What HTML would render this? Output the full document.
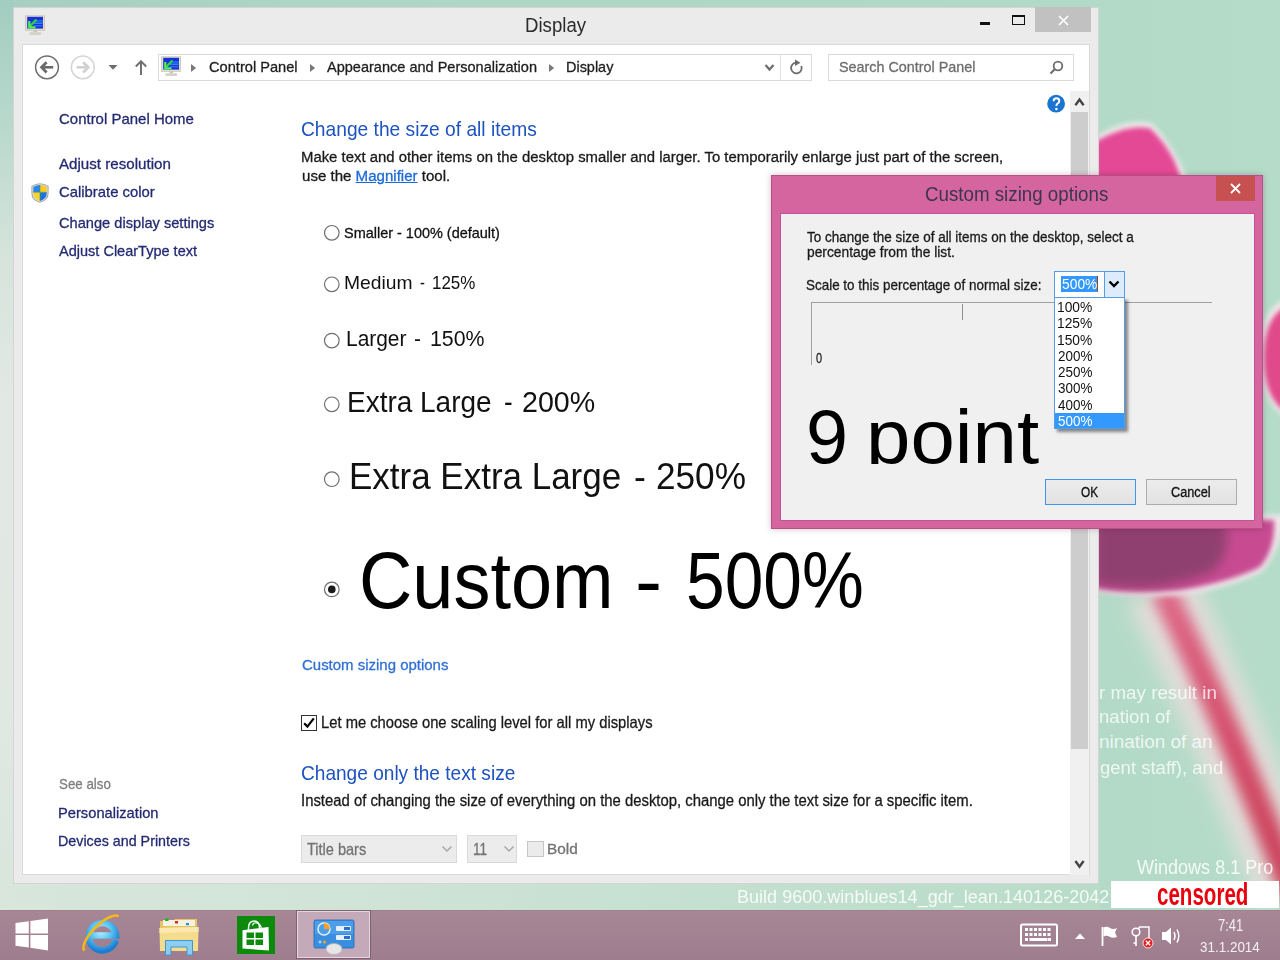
<!DOCTYPE html>
<html><head><meta charset="utf-8">
<style>
*{margin:0;padding:0;box-sizing:border-box}
html,body{width:1280px;height:960px;overflow:hidden;font-family:"Liberation Sans",sans-serif}
body{position:relative;background:#b3dac8}
.a{position:absolute}
.full{position:absolute;left:0;top:0;width:1280px;height:960px}
</style></head><body>
<!-- desktop background -->
<div class="full" style="background:linear-gradient(90deg,#a6cfc1 0px,#aed5c5 300px,#b3dac8 1100px,#b4dcc8 1280px)"></div>
<div class="a" style="left:0;top:0;width:14px;height:910px;background:linear-gradient(180deg,#a2cdc0 0px,#b8d8cc 120px,#d6e4dc 260px,#e2e8e4 400px,#e0e8e2 700px,#d8e6dc 900px)"></div>
<div class="a" style="left:0;top:883px;width:1100px;height:27px;background:linear-gradient(90deg,#d8e6dc 0px,#d2e4d8 300px,#c4e0d0 700px,#b8dcc8 1100px)"></div>
<svg class="full" viewBox="0 0 1280 960" style="position:absolute;left:0;top:0">
 <defs>
  <filter id="bl6" x="-50%" y="-50%" width="200%" height="200%"><feGaussianBlur stdDeviation="6"/></filter>
  <filter id="bl3" x="-50%" y="-50%" width="200%" height="200%"><feGaussianBlur stdDeviation="2.5"/></filter>
  <filter id="bl8" x="-50%" y="-50%" width="200%" height="200%"><feGaussianBlur stdDeviation="7"/></filter>
  <filter id="bl10" x="-50%" y="-50%" width="200%" height="200%"><feGaussianBlur stdDeviation="10"/></filter>
 </defs>
 <!-- stem halo -->
 <path d="M1160 588 Q1195 660 1225 730 Q1255 800 1292 892" stroke="#e8dedc" stroke-width="70" fill="none" filter="url(#bl10)" opacity="0.9"/>
 <defs><linearGradient id="stg" x1="0" y1="590" x2="0" y2="900" gradientUnits="userSpaceOnUse"><stop offset="0" stop-color="#de6a88"/><stop offset="0.5" stop-color="#d44c6a"/><stop offset="1" stop-color="#c84058"/></linearGradient></defs>
 <path d="M1163 590 Q1198 662 1228 732 Q1258 802 1294 894" stroke="url(#stg)" stroke-width="26" fill="none" filter="url(#bl8)"/>
 <!-- top petal -->
 <path d="M1095 138 Q1125 118 1152 124 Q1168 140 1178 160 Q1186 175 1190 190 L1095 190 Z" fill="#f4f2f0" filter="url(#bl3)"/>
 <path d="M1095 142 Q1125 124 1150 128 Q1165 142 1174 160 Q1181 175 1184 190 L1095 190 Z" fill="#e44896" filter="url(#bl3)"/>
 <!-- right petal -->
 <path d="M1290 298 Q1260 305 1260 355 Q1260 405 1290 420 Z" fill="#f0e8ec" filter="url(#bl3)"/>
 <path d="M1290 306 Q1264 312 1264 358 Q1264 402 1290 414 Z" fill="#e0488a" filter="url(#bl3)"/>
 <!-- bulb -->
 <path d="M1095 515 L1285 515 Q1282 548 1262 572 Q1230 588 1180 595 Q1130 598 1095 592 Z" fill="#f0e6ea" filter="url(#bl3)"/>
 <path d="M1095 520 L1274 520 Q1276 548 1260 567 Q1230 582 1180 590 Q1130 594 1095 588 Z" fill="#c84c92" filter="url(#bl3)"/>
 <path d="M1095 520 L1225 520 Q1232 550 1215 570 Q1180 586 1140 588 Q1115 587 1095 584 Z" fill="#904070" filter="url(#bl6)"/>
</svg>
<div style="position:absolute;left:1099.01px;top:683.50px;font-size:18.93px;font-weight:normal;font-family:'Liberation Sans',sans-serif;color:rgba(255,255,255,0.78);line-height:1;white-space:nowrap;transform:scaleX(0.9924);transform-origin:0 0;">r may result in</div>
<div style="position:absolute;left:1099.02px;top:708.10px;font-size:18.93px;font-weight:normal;font-family:'Liberation Sans',sans-serif;color:rgba(255,255,255,0.78);line-height:1;white-space:nowrap;transform:scaleX(0.9843);transform-origin:0 0;">nation of</div>
<div style="position:absolute;left:1099.00px;top:733.30px;font-size:18.93px;font-weight:normal;font-family:'Liberation Sans',sans-serif;color:rgba(255,255,255,0.78);line-height:1;white-space:nowrap;">nination of an</div>
<div style="position:absolute;left:1100.00px;top:758.50px;font-size:18.93px;font-weight:normal;font-family:'Liberation Sans',sans-serif;color:rgba(255,255,255,0.78);line-height:1;white-space:nowrap;transform:scaleX(0.9788);transform-origin:0 0;">gent staff), and</div>
<div style="position:absolute;left:1137.00px;top:856.60px;font-size:20.35px;font-weight:normal;font-family:'Liberation Sans',sans-serif;color:rgba(255,255,255,0.85);line-height:1;white-space:nowrap;transform:scaleX(0.8862);transform-origin:0 0;">Windows 8.1 Pro</div>
<div style="position:absolute;left:737.44px;top:888.40px;font-size:18.9px;font-weight:normal;font-family:'Liberation Sans',sans-serif;color:rgba(255,255,255,0.85);line-height:1;white-space:nowrap;transform:scaleX(0.9555);transform-origin:0 0;">Build 9600.winblues14_gdr_lean.140126-2042</div>

<!-- main window -->
<div class="a" style="left:13px;top:7px;width:1086px;height:877px;background:#ebebeb;border:1px solid #d4d4d4"></div>
<div class="a" style="left:22px;top:44px;width:1068px;height:831px;background:#fff;border:1px solid #dadada"></div>
<!-- title icon -->
<svg class="a" style="left:25px;top:15px" width="21" height="21" viewBox="0 0 21 21">
 <rect x="0.6" y="0.8" width="19" height="14.5" fill="#e2dfcf" stroke="#c8c4b0" stroke-width="0.8"/>
 <rect x="2.2" y="1.8" width="15.8" height="11.8" fill="#1a30d8"/>
 <rect x="9" y="5" width="9" height="3" fill="#1a70f0" opacity="0.8"/>
 <path d="M9 8.5 H17.5 M9 10.8 H17.5" stroke="#3a80f0" stroke-width="1"/>
 <path d="M11.5 4.5 L5 11.2" stroke="#30d040" stroke-width="2.4"/>
 <path d="M4.3 6 V12.3 H10.5" stroke="#50f060" stroke-width="2.2" fill="none"/>
 <rect x="8.5" y="15.3" width="3.5" height="2" fill="#c8c4b4"/>
 <rect x="4.5" y="17.3" width="11.5" height="2.6" fill="#d4d0c4"/>
</svg>
<!-- min max close -->
<div class="a" style="left:980px;top:22px;width:10px;height:3px;background:#111"></div>
<div class="a" style="left:1012px;top:15px;width:13px;height:10px;border:1px solid #111;border-top:2px solid #111"></div>
<div class="a" style="left:1035px;top:7px;width:56px;height:25px;background:#c1c1c1"></div>
<svg class="a" style="left:1057px;top:14px" width="13" height="13" viewBox="0 0 13 13"><path d="M2 2 L11 11 M11 2 L2 11" stroke="#fff" stroke-width="1.6"/></svg>

<!-- nav buttons -->
<svg class="a" style="left:30px;top:50px" width="70" height="34" viewBox="0 0 70 34">
 <circle cx="17" cy="17.3" r="11.4" fill="none" stroke="#6e6e6e" stroke-width="1.5"/>
 <path d="M13 17.3 H23.2" stroke="#6a6a6a" stroke-width="2.6"/>
 <path d="M16.6 12.2 L11.6 17.3 L16.6 22.4" fill="none" stroke="#6a6a6a" stroke-width="2.8"/>
 <circle cx="52.8" cy="17.3" r="11.4" fill="none" stroke="#d4d4d4" stroke-width="1.5"/>
 <path d="M56.8 17.3 H46.6" stroke="#d0d0d0" stroke-width="2.6"/>
 <path d="M53.2 12.2 L58.2 17.3 L53.2 22.4" fill="none" stroke="#d0d0d0" stroke-width="2.8"/>
</svg>
<svg class="a" style="left:105px;top:60px" width="50" height="18" viewBox="0 0 50 18">
 <path d="M3.5 5 L12.5 5 L8 9.7 Z" fill="#6d6d6d"/>
 <path d="M36 15 V1.5 M30.8 6.5 L36 1.3 L41.2 6.5" stroke="#707070" stroke-width="2" fill="none"/>
</svg>
<!-- address bar -->
<div class="a" style="left:158px;top:54px;width:654px;height:27px;border:1px solid #d9d9d9;background:#fff"></div>
<div class="a" style="left:780px;top:55px;width:1px;height:25px;background:#e2e2e2"></div>
<svg class="a" style="left:161px;top:56px" width="21" height="21" viewBox="0 0 21 21">
 <rect x="0.6" y="0.8" width="19" height="14.5" fill="#e2dfcf" stroke="#c8c4b0" stroke-width="0.8"/>
 <rect x="2.2" y="1.8" width="15.8" height="11.8" fill="#1a30d8"/>
 <rect x="9" y="5" width="9" height="3" fill="#1a70f0" opacity="0.8"/>
 <path d="M9 8.5 H17.5 M9 10.8 H17.5" stroke="#3a80f0" stroke-width="1"/>
 <path d="M11.5 4.5 L5 11.2" stroke="#30d040" stroke-width="2.4"/>
 <path d="M4.3 6 V12.3 H10.5" stroke="#50f060" stroke-width="2.2" fill="none"/>
 <rect x="8.5" y="15.3" width="3.5" height="2" fill="#c8c4b4"/>
 <rect x="4.5" y="17.3" width="11.5" height="2.6" fill="#d4d0c4"/>
</svg>
<svg class="a" style="left:188px;top:60px" width="380" height="16" viewBox="0 0 380 16">
 <path d="M3 4 L8.2 8 L3 12 Z" fill="#7a7a7a"/>
 <path d="M122 4 L127.2 8 L122 12 Z" fill="#7a7a7a"/>
 <path d="M361 4 L366.2 8 L361 12 Z" fill="#7a7a7a"/>
</svg>
<svg class="a" style="left:760px;top:58px" width="50" height="20" viewBox="0 0 50 20">
 <path d="M5.5 7 L9.5 11.5 L13.5 7" stroke="#6d6d6d" stroke-width="2.2" fill="none"/>
 <path d="M41.3 8 A5.3 5.3 0 1 1 36 4.7" stroke="#6d6d6d" stroke-width="1.8" fill="none"/>
 <path d="M35 1.5 L40.5 4.7 L35 8 Z" fill="#6d6d6d"/>
</svg>
<!-- search -->
<div class="a" style="left:828px;top:54px;width:246px;height:27px;border:1px solid #d9d9d9;background:#fff"></div>
<svg class="a" style="left:1046px;top:58px" width="20" height="20" viewBox="0 0 20 20">
 <circle cx="12" cy="8" r="4.3" fill="none" stroke="#6d6d6d" stroke-width="1.8"/>
 <path d="M9 11 L4.5 15.5" stroke="#6d6d6d" stroke-width="2.2"/>
</svg>
<!-- help -->
<svg class="a" style="left:1046px;top:93px" width="21" height="22" viewBox="0 0 21 22">
 <circle cx="10.1" cy="10.7" r="8.9" fill="#1a74d0"/>
 <path d="M7.6 8.2 Q7.6 5.3 10.5 5.3 Q13.3 5.3 13.3 7.9 Q13.3 9.5 11.6 10.5 Q10.4 11.3 10.4 13" stroke="#fff" stroke-width="1.9" fill="none"/>
 <circle cx="10.4" cy="15.9" r="1.25" fill="#fff"/>
</svg>
<!-- scrollbar -->
<div class="a" style="left:1070px;top:91px;width:19px;height:784px;background:#f0f0f0"></div>
<div class="a" style="left:1071px;top:112px;width:17px;height:637px;background:#cdcdcd"></div>
<svg class="a" style="left:1070px;top:94px" width="19" height="16" viewBox="0 0 19 16"><path d="M5.4 11.2 L9.5 5.6 L13.6 11.2" stroke="#444" stroke-width="2.4" fill="none"/></svg>
<svg class="a" style="left:1070px;top:856px" width="19" height="16" viewBox="0 0 19 16"><path d="M5.4 5 L9.5 10.6 L13.6 5" stroke="#444" stroke-width="2.4" fill="none"/></svg>

<!-- shield -->
<svg class="a" style="left:30px;top:181px" width="20" height="23" viewBox="0 0 20 23">
 <defs><clipPath id="shc"><path d="M3.3 6 Q10 1.8 16.7 6 L16.7 12 Q16.7 18 10 19.9 Q3.3 18 3.3 12 Z"/></clipPath></defs>
 <path d="M1.4 5 Q10 -0.6 18.6 5 L18.6 12 Q18.6 19.8 10 21.8 Q1.4 19.8 1.4 12 Z" fill="#a4a4a4"/>
 <path d="M2.4 5.5 Q10 0.8 17.6 5.5 L17.6 12 Q17.6 18.8 10 20.8 Q2.4 18.8 2.4 12 Z" fill="#dcdcdc"/>
 <g clip-path="url(#shc)">
  <rect x="0" y="0" width="10" height="11.3" fill="#2a86e8"/>
  <rect x="10" y="0" width="10" height="11.3" fill="#f6cc20"/>
  <rect x="0" y="11.3" width="10" height="12" fill="#f6d42a"/>
  <rect x="10" y="11.3" width="10" height="12" fill="#1a74e0"/>
  <path d="M0 11.3 H20 M10 0 V23" stroke="#5a8a60" stroke-width="0.6"/>
 </g>
</svg>
<!-- radios -->
<svg class="a" style="left:320px;top:220px" width="30" height="390" viewBox="0 0 30 390">
 <g fill="#fff" stroke="#6e6e6e" stroke-width="1.2">
  <circle cx="11.8" cy="12.8" r="7.3"/>
  <circle cx="11.8" cy="64.3" r="7.3"/>
  <circle cx="11.8" cy="120.6" r="7.3"/>
  <circle cx="11.8" cy="184.3" r="7.3"/>
  <circle cx="11.8" cy="259.2" r="7.3"/>
  <circle cx="11.8" cy="369.4" r="7.3"/>
 </g>
 <circle cx="11.8" cy="369.4" r="3.8" fill="#1a1a1a"/>
</svg>
<!-- checkbox -->
<div class="a" style="left:301px;top:715px;width:16px;height:16px;border:1px solid #333;background:#fff"></div>
<svg class="a" style="left:301px;top:715px" width="16" height="16" viewBox="0 0 16 16"><path d="M3.2 8.2 L6.4 11.6 L12.8 3.4" stroke="#000" stroke-width="2.2" fill="none"/></svg>
<!-- dropdowns -->
<div class="a" style="left:301px;top:835px;width:156px;height:28px;border:1px solid #d9d9d9;background:#ececec"></div>
<div class="a" style="left:467px;top:835px;width:50px;height:28px;border:1px solid #d9d9d9;background:#ececec"></div>
<svg class="a" style="left:438px;top:842px" width="80" height="14" viewBox="0 0 80 14">
 <path d="M4.5 4.5 L9 9 L13.5 4.5" stroke="#a8a8a8" stroke-width="1.5" fill="none"/>
 <path d="M66.5 4.5 L71 9 L75.5 4.5" stroke="#a8a8a8" stroke-width="1.5" fill="none"/>
</svg>
<div class="a" style="left:527px;top:841px;width:17px;height:16px;border:1px solid #c6c6c6;background:#ebebeb"></div>

<div style="position:absolute;left:525.06px;top:15.90px;font-size:19.91px;font-weight:normal;font-family:'Liberation Sans',sans-serif;color:#2b2b2b;line-height:1;white-space:nowrap;transform:scaleX(0.9360);transform-origin:0 0;">Display</div>
<div style="position:absolute;left:208.60px;top:60.20px;font-size:14.97px;font-weight:normal;font-family:'Liberation Sans',sans-serif;color:#1e1e1e;line-height:1;white-space:nowrap;transform:scaleX(0.9771);transform-origin:0 0;-webkit-text-stroke:0.3px currentColor;">Control Panel</div>
<div style="position:absolute;left:326.60px;top:60.20px;font-size:14.97px;font-weight:normal;font-family:'Liberation Sans',sans-serif;color:#1e1e1e;line-height:1;white-space:nowrap;transform:scaleX(0.9706);transform-origin:0 0;-webkit-text-stroke:0.3px currentColor;">Appearance and Personalization</div>
<div style="position:absolute;left:565.83px;top:60.20px;font-size:14.97px;font-weight:normal;font-family:'Liberation Sans',sans-serif;color:#1e1e1e;line-height:1;white-space:nowrap;transform:scaleX(0.9651);transform-origin:0 0;-webkit-text-stroke:0.3px currentColor;">Display</div>
<div style="position:absolute;left:839.40px;top:60.00px;font-size:14.97px;font-weight:normal;font-family:'Liberation Sans',sans-serif;color:#6d6d6d;line-height:1;white-space:nowrap;transform:scaleX(0.9587);transform-origin:0 0;-webkit-text-stroke:0.3px currentColor;">Search Control Panel</div>
<div style="position:absolute;left:59.30px;top:110.90px;font-size:15.41px;font-weight:normal;font-family:'Liberation Sans',sans-serif;color:#232a72;line-height:1;white-space:nowrap;transform:scaleX(0.9721);transform-origin:0 0;-webkit-text-stroke:0.3px currentColor;">Control Panel Home</div>
<div style="position:absolute;left:59.30px;top:155.70px;font-size:15.41px;font-weight:normal;font-family:'Liberation Sans',sans-serif;color:#232a72;line-height:1;white-space:nowrap;transform:scaleX(0.9821);transform-origin:0 0;-webkit-text-stroke:0.3px currentColor;">Adjust resolution</div>
<div style="position:absolute;left:59.30px;top:184.40px;font-size:15.41px;font-weight:normal;font-family:'Liberation Sans',sans-serif;color:#232a72;line-height:1;white-space:nowrap;transform:scaleX(0.9647);transform-origin:0 0;-webkit-text-stroke:0.3px currentColor;">Calibrate color</div>
<div style="position:absolute;left:59.30px;top:214.50px;font-size:15.41px;font-weight:normal;font-family:'Liberation Sans',sans-serif;color:#232a72;line-height:1;white-space:nowrap;transform:scaleX(0.9495);transform-origin:0 0;-webkit-text-stroke:0.3px currentColor;">Change display settings</div>
<div style="position:absolute;left:59.30px;top:243.40px;font-size:15.41px;font-weight:normal;font-family:'Liberation Sans',sans-serif;color:#232a72;line-height:1;white-space:nowrap;transform:scaleX(0.9426);transform-origin:0 0;-webkit-text-stroke:0.3px currentColor;">Adjust ClearType text</div>
<div style="position:absolute;left:59.40px;top:775.75px;font-size:15.41px;font-weight:normal;font-family:'Liberation Sans',sans-serif;color:#7f7f7f;line-height:1;white-space:nowrap;transform:scaleX(0.8638);transform-origin:0 0;-webkit-text-stroke:0.3px currentColor;">See also</div>
<div style="position:absolute;left:58.45px;top:804.50px;font-size:15.41px;font-weight:normal;font-family:'Liberation Sans',sans-serif;color:#232a72;line-height:1;white-space:nowrap;transform:scaleX(0.9540);transform-origin:0 0;-webkit-text-stroke:0.3px currentColor;">Personalization</div>
<div style="position:absolute;left:58.47px;top:833.00px;font-size:15.41px;font-weight:normal;font-family:'Liberation Sans',sans-serif;color:#232a72;line-height:1;white-space:nowrap;transform:scaleX(0.9276);transform-origin:0 0;-webkit-text-stroke:0.3px currentColor;">Devices and Printers</div>
<div style="position:absolute;left:301.27px;top:119.40px;font-size:20.64px;font-weight:normal;font-family:'Liberation Sans',sans-serif;color:#1d52c0;line-height:1;white-space:nowrap;transform:scaleX(0.9308);transform-origin:0 0;">Change the size of all items</div>
<div style="position:absolute;left:301.20px;top:150.10px;font-size:14.83px;font-weight:normal;font-family:'Liberation Sans',sans-serif;color:#1a1a1a;line-height:1;white-space:nowrap;transform:scaleX(1.0038);transform-origin:0 0;-webkit-text-stroke:0.3px currentColor;">Make text and other items on the desktop smaller and larger. To temporarily enlarge just part of the screen,</div>
<div style="position:absolute;left:302.20px;top:168.70px;font-size:14.83px;font-weight:normal;font-family:'Liberation Sans',sans-serif;color:#1a1a1a;line-height:1;white-space:nowrap;transform:scaleX(1.0161);transform-origin:0 0;-webkit-text-stroke:0.3px currentColor;">use the <span style="color:#1a6ad8;text-decoration:underline">Magnifier</span> tool.</div>
<div style="position:absolute;left:344.30px;top:225.50px;font-size:14.97px;font-weight:normal;font-family:'Liberation Sans',sans-serif;color:#111;line-height:1;white-space:nowrap;transform:scaleX(0.9659);transform-origin:0 0;-webkit-text-stroke:0.3px currentColor;">Smaller - 100% (default)</div>
<div style="position:absolute;left:344.46px;top:273.70px;font-size:18.46px;font-weight:normal;font-family:'Liberation Sans',sans-serif;color:#111;line-height:1;white-space:nowrap;transform:scaleX(1.0449);transform-origin:0 0;">Medium</div>
<div style="position:absolute;left:420.30px;top:273.70px;font-size:18.46px;font-weight:normal;font-family:'Liberation Sans',sans-serif;color:#111;line-height:1;white-space:nowrap;transform:scaleX(0.8000);transform-origin:0 0;">-</div>
<div style="position:absolute;left:432.28px;top:273.70px;font-size:18.46px;font-weight:normal;font-family:'Liberation Sans',sans-serif;color:#111;line-height:1;white-space:nowrap;transform:scaleX(0.9200);transform-origin:0 0;">125%</div>
<div style="position:absolute;left:345.78px;top:327.00px;font-size:22.82px;font-weight:normal;font-family:'Liberation Sans',sans-serif;color:#111;line-height:1;white-space:nowrap;transform:scaleX(0.9167);transform-origin:0 0;">Larger</div>
<div style="position:absolute;left:413.88px;top:327.00px;font-size:22.82px;font-weight:normal;font-family:'Liberation Sans',sans-serif;color:#111;line-height:1;white-space:nowrap;transform:scaleX(0.9167);transform-origin:0 0;">-</div>
<div style="position:absolute;left:429.66px;top:327.00px;font-size:22.82px;font-weight:normal;font-family:'Liberation Sans',sans-serif;color:#111;line-height:1;white-space:nowrap;transform:scaleX(0.9358);transform-origin:0 0;">150%</div>
<div style="position:absolute;left:347.11px;top:387.10px;font-size:29.65px;font-weight:normal;font-family:'Liberation Sans',sans-serif;color:#111;line-height:1;white-space:nowrap;transform:scaleX(0.9433);transform-origin:0 0;">Extra Large</div>
<div style="position:absolute;left:503.52px;top:387.10px;font-size:29.65px;font-weight:normal;font-family:'Liberation Sans',sans-serif;color:#111;line-height:1;white-space:nowrap;transform:scaleX(0.8750);transform-origin:0 0;">-</div>
<div style="position:absolute;left:522.13px;top:387.10px;font-size:29.65px;font-weight:normal;font-family:'Liberation Sans',sans-serif;color:#111;line-height:1;white-space:nowrap;transform:scaleX(0.9657);transform-origin:0 0;">200%</div>
<div style="position:absolute;left:349.17px;top:457.80px;font-size:37.06px;font-weight:normal;font-family:'Liberation Sans',sans-serif;color:#111;line-height:1;white-space:nowrap;transform:scaleX(0.9441);transform-origin:0 0;">Extra Extra Large</div>
<div style="position:absolute;left:633.94px;top:457.80px;font-size:37.06px;font-weight:normal;font-family:'Liberation Sans',sans-serif;color:#111;line-height:1;white-space:nowrap;transform:scaleX(0.9600);transform-origin:0 0;">-</div>
<div style="position:absolute;left:656.35px;top:457.80px;font-size:37.06px;font-weight:normal;font-family:'Liberation Sans',sans-serif;color:#111;line-height:1;white-space:nowrap;transform:scaleX(0.9492);transform-origin:0 0;">250%</div>
<div style="position:absolute;left:358.58px;top:540.80px;font-size:79.36px;font-weight:normal;font-family:'Liberation Sans',sans-serif;color:#000;line-height:1;white-space:nowrap;transform:scaleX(0.9311);transform-origin:0 0;">Custom</div>
<div style="position:absolute;left:635.42px;top:540.80px;font-size:79.36px;font-weight:normal;font-family:'Liberation Sans',sans-serif;color:#000;line-height:1;white-space:nowrap;transform:scaleX(1.0250);transform-origin:0 0;">-</div>
<div style="position:absolute;left:686.37px;top:540.80px;font-size:79.36px;font-weight:normal;font-family:'Liberation Sans',sans-serif;color:#000;line-height:1;white-space:nowrap;transform:scaleX(0.8764);transform-origin:0 0;">500%</div>
<div style="position:absolute;left:302.00px;top:656.90px;font-size:15.55px;font-weight:normal;font-family:'Liberation Sans',sans-serif;color:#2f6fd6;line-height:1;white-space:nowrap;transform:scaleX(0.9625);transform-origin:0 0;-webkit-text-stroke:0.3px currentColor;">Custom sizing options</div>
<div style="position:absolute;left:320.59px;top:714.00px;font-size:16.28px;font-weight:normal;font-family:'Liberation Sans',sans-serif;color:#1a1a1a;line-height:1;white-space:nowrap;transform:scaleX(0.9077);transform-origin:0 0;-webkit-text-stroke:0.3px currentColor;">Let me choose one scaling level for all my displays</div>
<div style="position:absolute;left:301.07px;top:763.30px;font-size:20.49px;font-weight:normal;font-family:'Liberation Sans',sans-serif;color:#1d52c0;line-height:1;white-space:nowrap;transform:scaleX(0.9316);transform-origin:0 0;">Change only the text size</div>
<div style="position:absolute;left:301.06px;top:793.20px;font-size:15.84px;font-weight:normal;font-family:'Liberation Sans',sans-serif;color:#1a1a1a;line-height:1;white-space:nowrap;transform:scaleX(0.9391);transform-origin:0 0;-webkit-text-stroke:0.3px currentColor;">Instead of changing the size of everything on the desktop, change only the text size for a specific item.</div>
<div style="position:absolute;left:306.90px;top:841.00px;font-size:16.28px;font-weight:normal;font-family:'Liberation Sans',sans-serif;color:#737373;line-height:1;white-space:nowrap;transform:scaleX(0.8934);transform-origin:0 0;-webkit-text-stroke:0.3px currentColor;">Title bars</div>
<div style="position:absolute;left:472.87px;top:841.00px;font-size:16.28px;font-weight:normal;font-family:'Liberation Sans',sans-serif;color:#737373;line-height:1;white-space:nowrap;transform:scaleX(0.8271);transform-origin:0 0;-webkit-text-stroke:0.3px currentColor;">11</div>
<div style="position:absolute;left:546.99px;top:840.50px;font-size:15.26px;font-weight:normal;font-family:'Liberation Sans',sans-serif;color:#737373;line-height:1;white-space:nowrap;transform:scaleX(1.0089);transform-origin:0 0;-webkit-text-stroke:0.3px currentColor;">Bold</div>

<!-- dialog -->
<div class="a" style="left:771px;top:175px;width:492px;height:354px;background:#d5659f;border:1px solid #b85088;box-shadow:0 0 6px rgba(60,0,30,0.25)"></div>
<div class="a" style="left:1216px;top:176px;width:39px;height:25px;background:#c75050"></div>
<svg class="a" style="left:1228px;top:181px" width="15" height="15" viewBox="0 0 15 15"><path d="M3 3 L12 12 M12 3 L3 12" stroke="#fff" stroke-width="1.8"/></svg>
<div class="a" style="left:780px;top:213px;width:475px;height:308px;background:#c4529a"></div>
<div class="a" style="left:781px;top:214px;width:473px;height:306px;background:#f0f0f0"></div>
<!-- ruler -->
<div class="a" style="left:811px;top:302px;width:401px;height:1px;background:#a0a0a0"></div>
<div class="a" style="left:811px;top:302px;width:1px;height:63px;background:#a0a0a0"></div>
<div class="a" style="left:962px;top:304px;width:1px;height:16px;background:#909090"></div>
<!-- buttons -->
<div class="a" style="left:1045px;top:479px;width:91px;height:26px;border:1px solid #3c97e8;background:linear-gradient(#ececec,#e2e2e2)"></div>
<div class="a" style="left:1146px;top:479px;width:91px;height:26px;border:1px solid #adadad;background:linear-gradient(#ececec,#e2e2e2)"></div>
<div style="position:absolute;left:925.30px;top:185.25px;font-size:19.77px;font-weight:normal;font-family:'Liberation Sans',sans-serif;color:#3a3552;line-height:1;white-space:nowrap;transform:scaleX(0.9479);transform-origin:0 0;">Custom sizing options</div>
<div style="position:absolute;left:806.60px;top:229.50px;font-size:14.39px;font-weight:normal;font-family:'Liberation Sans',sans-serif;color:#1a1a1a;line-height:1;white-space:nowrap;transform:scaleX(0.9377);transform-origin:0 0;-webkit-text-stroke:0.3px currentColor;">To change the size of all items on the desktop, select a</div>
<div style="position:absolute;left:806.60px;top:244.90px;font-size:14.39px;font-weight:normal;font-family:'Liberation Sans',sans-serif;color:#1a1a1a;line-height:1;white-space:nowrap;transform:scaleX(0.9588);transform-origin:0 0;-webkit-text-stroke:0.3px currentColor;">percentage from the list.</div>
<div style="position:absolute;left:806.00px;top:277.10px;font-size:15.12px;font-weight:normal;font-family:'Liberation Sans',sans-serif;color:#1a1a1a;line-height:1;white-space:nowrap;transform:scaleX(0.8900);transform-origin:0 0;-webkit-text-stroke:0.3px currentColor;">Scale to this percentage of normal size:</div>
<div style="position:absolute;left:815.50px;top:351.00px;font-size:14.54px;font-weight:normal;font-family:'Liberation Sans',sans-serif;color:#222;line-height:1;white-space:nowrap;transform:scaleX(0.7500);transform-origin:0 0;-webkit-text-stroke:0.3px currentColor;">0</div>
<div style="position:absolute;left:1080.80px;top:486.20px;font-size:13.95px;font-weight:normal;font-family:'Liberation Sans',sans-serif;color:#111;line-height:1;white-space:nowrap;transform:scaleX(0.8493);transform-origin:0 0;-webkit-text-stroke:0.3px currentColor;">OK</div>
<div style="position:absolute;left:1170.50px;top:486.20px;font-size:13.95px;font-weight:normal;font-family:'Liberation Sans',sans-serif;color:#111;line-height:1;white-space:nowrap;transform:scaleX(0.9125);transform-origin:0 0;-webkit-text-stroke:0.3px currentColor;">Cancel</div>
<div class="full" style="clip-path:inset(0 0 496px 0)">
<div style="position:absolute;left:805.73px;top:399.00px;font-size:76.16px;font-weight:normal;font-family:'Liberation Sans',sans-serif;color:#000;line-height:1;white-space:nowrap;transform:scaleX(0.9917);transform-origin:0 0;">9</div>
<div style="position:absolute;left:866.41px;top:399.00px;font-size:76.16px;font-weight:normal;font-family:'Liberation Sans',sans-serif;color:#000;line-height:1;white-space:nowrap;transform:scaleX(1.0479);transform-origin:0 0;">point</div>
</div>
<!-- combobox -->
<div class="a" style="left:1054px;top:271px;width:71px;height:27px;border:1px solid #569de5;background:#fff"></div>
<div class="a" style="left:1104px;top:272px;width:20px;height:25px;background:#dcecfc;border-left:1px solid #569de5"></div>
<svg class="a" style="left:1104px;top:276px" width="20" height="16" viewBox="0 0 20 16"><path d="M5.5 5.5 L10 10 L14.5 5.5" stroke="#000" stroke-width="2.4" fill="none"/></svg>
<div class="a" style="left:1061px;top:275.5px;width:37px;height:16px;background:#3399ff"></div>
<div class="a" style="left:1097px;top:276px;width:1px;height:15px;background:#a04000"></div>
<!-- list -->
<div class="a" style="left:1054px;top:297px;width:71px;height:132px;border:1px solid #569de5;background:#fff;box-shadow:3px 3px 3px rgba(0,0,0,0.45)"></div>
<div class="a" style="left:1055px;top:413px;width:69px;height:15px;background:#3399ff"></div>
<div style="position:absolute;left:1062.00px;top:276.30px;font-size:15.12px;font-weight:normal;font-family:'Liberation Sans',sans-serif;color:#fff;line-height:1;white-space:nowrap;transform:scaleX(0.9160);transform-origin:0 0;">500%</div>
<div style="position:absolute;left:1057.22px;top:299.90px;font-size:14.1px;font-weight:normal;font-family:'Liberation Sans',sans-serif;color:#111;line-height:1;white-space:nowrap;transform:scaleX(0.9799);transform-origin:0 0;">100%</div>
<div style="position:absolute;left:1057.22px;top:316.20px;font-size:14.1px;font-weight:normal;font-family:'Liberation Sans',sans-serif;color:#111;line-height:1;white-space:nowrap;transform:scaleX(0.9799);transform-origin:0 0;">125%</div>
<div style="position:absolute;left:1057.22px;top:332.50px;font-size:14.1px;font-weight:normal;font-family:'Liberation Sans',sans-serif;color:#111;line-height:1;white-space:nowrap;transform:scaleX(0.9799);transform-origin:0 0;">150%</div>
<div style="position:absolute;left:1058.20px;top:348.80px;font-size:14.1px;font-weight:normal;font-family:'Liberation Sans',sans-serif;color:#111;line-height:1;white-space:nowrap;transform:scaleX(0.9530);transform-origin:0 0;">200%</div>
<div style="position:absolute;left:1058.20px;top:365.10px;font-size:14.1px;font-weight:normal;font-family:'Liberation Sans',sans-serif;color:#111;line-height:1;white-space:nowrap;transform:scaleX(0.9530);transform-origin:0 0;">250%</div>
<div style="position:absolute;left:1058.20px;top:381.40px;font-size:14.1px;font-weight:normal;font-family:'Liberation Sans',sans-serif;color:#111;line-height:1;white-space:nowrap;transform:scaleX(0.9530);transform-origin:0 0;">300%</div>
<div style="position:absolute;left:1058.20px;top:397.70px;font-size:14.1px;font-weight:normal;font-family:'Liberation Sans',sans-serif;color:#111;line-height:1;white-space:nowrap;transform:scaleX(0.9530);transform-origin:0 0;">400%</div>
<div style="position:absolute;left:1058.20px;top:414.00px;font-size:14.1px;font-weight:normal;font-family:'Liberation Sans',sans-serif;color:#fff;line-height:1;white-space:nowrap;transform:scaleX(0.9530);transform-origin:0 0;">500%</div>

<!-- taskbar -->
<div class="a" style="left:0;top:910px;width:1280px;height:50px;background:linear-gradient(180deg,#9a7888 0px,#a78696 1px,#a38292 20px,#9e7e8e 50px)"></div>
<!-- windows logo -->
<svg class="a" style="left:14px;top:917px" width="36" height="35" viewBox="0 0 36 35">
 <path d="M1.5 6 L14.8 4.2 L14.8 16.5 L1.5 16.5 Z M16.4 4 L34 1.4 L34 16.5 L16.4 16.5 Z M1.5 18 L14.8 18 L14.8 30.5 L1.5 28.8 Z M16.4 18 L34 18 L34 33.4 L16.4 30.8 Z" fill="#fff"/>
</svg>
<!-- IE -->
<svg class="a" style="left:78px;top:912px" width="46" height="44" viewBox="0 0 46 44">
 <defs><radialGradient id="ieg" cx="0.45" cy="0.3" r="0.75"><stop offset="0" stop-color="#b8f0ff"/><stop offset="0.5" stop-color="#56c4f4"/><stop offset="1" stop-color="#1a7cd0"/></radialGradient></defs>
 <path d="M37.6 28.2 A13.6 13.6 0 1 1 38 23.5 L11 23.5" fill="none" stroke="url(#ieg)" stroke-width="6.6"/>
 <g transform="translate(23.5 21.5) rotate(-45)"><path d="M-24 0 A24 8.5 0 0 1 24 0" fill="none" stroke="#f4b81e" stroke-width="2.6"/></g>
</svg>
<!-- explorer -->
<svg class="a" style="left:157px;top:915px" width="44" height="42" viewBox="0 0 44 42">
 <path d="M3 6 L16 6 L18 4 L40 4 L41 36 L3 36 Z" fill="#e6c466"/>
 <rect x="6" y="5" width="32" height="6" fill="#f6f2e0"/>
 <rect x="8" y="3.5" width="3.5" height="2.5" fill="#18b818"/><rect x="18" y="6" width="3" height="2.5" fill="#d83018"/><rect x="29" y="8" width="3" height="2.2" fill="#2090e0"/>
 <path d="M2.5 13 L41.5 12 L41 36 L3 36 Z" fill="#f4dc8c"/>
 <path d="M2.5 13 L41.5 12 L41.5 17 L2.5 18 Z" fill="#fae8b0"/>
 <path d="M8.5 40 L8.5 25.5 L35.5 25.5 L35.5 40 L30 40 L30 32 L14 32 L14 40 Z" fill="#8ccdf0" stroke="#3a9ad8" stroke-width="1"/>
</svg>
<!-- store -->
<div class="a" style="left:237px;top:916px;width:38px;height:38px;background:#0c8a0c"></div>
<svg class="a" style="left:237px;top:916px" width="38" height="38" viewBox="0 0 38 38">
 <path d="M11.5 14 Q11 5 17 5 Q22.5 5 22.5 12" stroke="#fff" stroke-width="1.5" fill="none"/>
 <path d="M15.5 9.5 Q16 6.5 19.5 6.8 Q23.5 7.5 24.5 12.5" stroke="#fff" stroke-width="1.2" fill="none"/>
 <path d="M5.5 14.2 L31.5 11 L32 34.6 L5.5 32.6 Z" fill="#fff"/>
 <path d="M9.5 16.5 L17 16.5 L17 22 L9.5 22 Z M18.5 16.5 L26 16.5 L26 22 L18.5 22 Z M9.5 23.5 L17 23.5 L17 29 L9.5 29 Z M18.5 23.5 L26 23.5 L26 29 L18.5 29 Z" fill="#0c8a0c"/>
</svg>
<!-- control panel active -->
<div class="a" style="left:296px;top:910px;width:75px;height:49px;background:#c4aab8;border:1px solid #7e6070;box-shadow:inset 0 0 0 1px #e6d6de"></div>
<svg class="a" style="left:312px;top:918px" width="44" height="38" viewBox="0 0 44 38">
 <rect x="2" y="2" width="40" height="28" rx="1.5" fill="#3a8ee0" stroke="#2468b8" stroke-width="0.8"/>
 <rect x="3" y="3" width="38" height="13" fill="#5aa6ec" opacity="0.6"/>
 <circle cx="12" cy="11" r="6" fill="none" stroke="#e8f4ff" stroke-width="1.4"/>
 <path d="M12 5 A6 6 0 0 1 18 11 L12 11 Z" fill="#f8a020"/>
 <rect x="24" y="8" width="15" height="5" rx="1" fill="#e4f0ff"/><rect x="32" y="9" width="6" height="3" fill="#2a70c8"/>
 <rect x="24" y="17" width="15" height="5" rx="1" fill="#e4f0ff"/><rect x="32" y="18" width="6" height="3" fill="#2a70c8"/>
 <circle cx="8" cy="24" r="1.4" fill="#a8d8f8"/><circle cx="12.5" cy="24" r="1.6" fill="#f8a020"/>
 <ellipse cx="22" cy="31" rx="8" ry="5.5" fill="#e6e6e6" stroke="#b8b8b8" stroke-width="0.8"/>
</svg>
<!-- tray -->
<svg class="a" style="left:1018px;top:922px" width="170" height="28" viewBox="0 0 170 28">
 <rect x="3" y="2.5" width="36" height="21" rx="1.5" fill="none" stroke="#fff" stroke-width="2"/>
 <g fill="#fff">
  <rect x="7" y="6" width="3" height="3"/><rect x="11.5" y="6" width="3" height="3"/><rect x="16" y="6" width="3" height="3"/><rect x="20.5" y="6" width="3" height="3"/><rect x="25" y="6" width="3" height="3"/><rect x="29.5" y="6" width="3" height="3"/>
  <rect x="7" y="11" width="3" height="3"/><rect x="11.5" y="11" width="3" height="3"/><rect x="16" y="11" width="3" height="3"/><rect x="20.5" y="11" width="3" height="3"/><rect x="25" y="11" width="3" height="3"/><rect x="29.5" y="11" width="3" height="3"/>
  <rect x="7" y="16" width="3" height="3"/><rect x="11.5" y="16" width="18" height="3"/><rect x="30" y="16" width="3" height="3"/>
 </g>
 <path d="M57 17 L62 11.5 L67 17 Z" fill="#fff"/>
 <path d="M84.5 5 V24" stroke="#fff" stroke-width="1.8"/>
 <path d="M85.5 5.5 Q89 4 92 6 Q95 8 99 6 L97 10.5 L99 15 Q95 16.5 92 15 Q89 13 85.5 14.5 Z" fill="#fff"/>
 <circle cx="118" cy="10" r="3.8" fill="none" stroke="#fff" stroke-width="1.6"/>
 <path d="M118 13.8 V24 M115.5 21 H118" stroke="#fff" stroke-width="1.6"/>
 <path d="M121 5 H131 V17 M121 5 V7" stroke="#fff" stroke-width="1.4" fill="none"/>
 <circle cx="130" cy="21" r="5" fill="#e02020" stroke="#fff" stroke-width="0.8"/>
 <path d="M127.8 18.8 L132.2 23.2 M132.2 18.8 L127.8 23.2" stroke="#fff" stroke-width="1.4"/>
 <path d="M144 10 H148 L153 5.5 V22.5 L148 18 H144 Z" fill="#fff"/>
 <path d="M156 10 Q158 14 156 18 M159 7.5 Q162.5 14 159 20.5" stroke="#fff" stroke-width="1.5" fill="none"/>
</svg>
<!-- censored box -->
<div class="a" style="left:1111px;top:881px;width:168px;height:27px;background:#fff"></div>
<div style="position:absolute;left:1157.35px;top:879.00px;font-size:31.42px;font-weight:bold;font-family:'Liberation Sans',sans-serif;color:#e8000c;line-height:1;white-space:nowrap;transform:scaleX(0.6547);transform-origin:0 0;">censored</div>
<div style="position:absolute;left:1217.80px;top:917.20px;font-size:16.28px;font-weight:normal;font-family:'Liberation Sans',sans-serif;color:#f4f0f2;line-height:1;white-space:nowrap;transform:scaleX(0.7972);transform-origin:0 0;">7:41</div>
<div style="position:absolute;left:1199.80px;top:938.70px;font-size:15.41px;font-weight:normal;font-family:'Liberation Sans',sans-serif;color:#f4f0f2;line-height:1;white-space:nowrap;transform:scaleX(0.8728);transform-origin:0 0;">31.1.2014</div>
</body></html>
